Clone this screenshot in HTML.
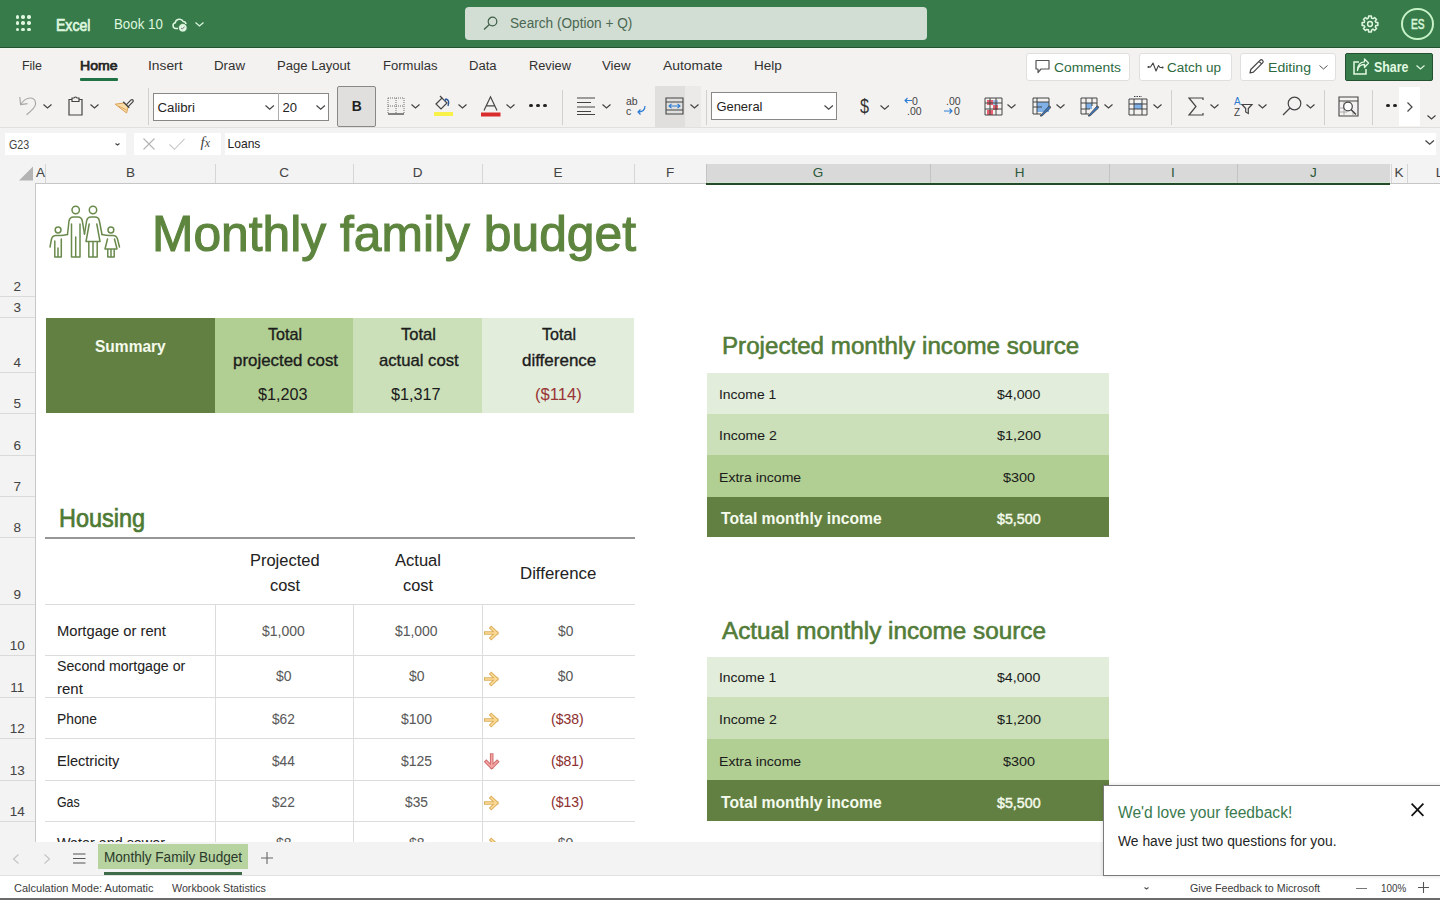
<!DOCTYPE html>
<html><head><meta charset="utf-8">
<style>
*{margin:0;padding:0;box-sizing:border-box}
html,body{width:1440px;height:900px;overflow:hidden;background:#fff;font-family:"Liberation Sans",sans-serif;position:relative}
.a{position:absolute}
.t{position:absolute;white-space:nowrap;line-height:1;}
.sh .t{-webkit-text-stroke:0.05px currentColor}
svg{position:absolute;overflow:visible}
</style></head><body>
<div class="a" style="left:0px;top:0px;width:1440px;height:47px;background:#377b4b;"></div>
<div class="a" style="left:0px;top:47px;width:1440px;height:1px;background:#24512f;"></div>
<div class="a" style="left:0px;top:48px;width:1440px;height:1px;background:#eef8ee;"></div>
<div class="a" style="left:0px;top:49px;width:1440px;height:78px;background:#f3f2f1;"></div>
<div class="a" style="left:0px;top:127px;width:1440px;height:1px;background:#e1e0df;"></div>
<div class="a" style="left:0px;top:128px;width:1440px;height:32px;background:#f3f3f3;"></div>
<div class="a" style="left:15.7px;top:15.3px;width:3.4px;height:3.4px;border-radius:50%;background:#dff7df"></div>
<div class="a" style="left:21.4px;top:15.3px;width:3.4px;height:3.4px;border-radius:50%;background:#dff7df"></div>
<div class="a" style="left:27.4px;top:15.3px;width:3.4px;height:3.4px;border-radius:50%;background:#dff7df"></div>
<div class="a" style="left:15.7px;top:21.3px;width:3.4px;height:3.4px;border-radius:50%;background:#dff7df"></div>
<div class="a" style="left:21.4px;top:21.3px;width:3.4px;height:3.4px;border-radius:50%;background:#dff7df"></div>
<div class="a" style="left:27.4px;top:21.3px;width:3.4px;height:3.4px;border-radius:50%;background:#dff7df"></div>
<div class="a" style="left:15.7px;top:27.5px;width:3.4px;height:3.4px;border-radius:50%;background:#dff7df"></div>
<div class="a" style="left:21.4px;top:27.5px;width:3.4px;height:3.4px;border-radius:50%;background:#dff7df"></div>
<div class="a" style="left:27.4px;top:27.5px;width:3.4px;height:3.4px;border-radius:50%;background:#dff7df"></div>
<div class="t" style="left:55.90px;top:17.09px;font-size:16.20px;color:#dff7df;font-weight:400;transform-origin:0 0;transform:scaleX(0.8683);-webkit-text-stroke:0.7px #dff7df;">Excel</div>
<div class="t" style="left:114.20px;top:17.27px;font-size:14.80px;color:#dff7df;font-weight:400;transform-origin:0 0;transform:scaleX(0.8984);">Book 10</div>
<svg style="left:172px;top:17px" width="16" height="15" viewBox="0 0 16 15">
<path d="M6 11.5 H3.8 A2.9 2.9 0 0 1 3.2 5.8 A4.3 4.3 0 0 1 11.3 4.6 A2.9 2.9 0 0 1 14 7.2" fill="none" stroke="#dff7df" stroke-width="1.5"/>
<circle cx="10.8" cy="10.8" r="4.3" fill="#dff7df" stroke="#377b4b" stroke-width="0.8"/>
<path d="M9 10.9 L10.3 12.1 L12.6 9.6" fill="none" stroke="#7a7a8a" stroke-width="1"/>
</svg>
<svg style="left:194.8px;top:21.9px" width="9" height="4.5" viewBox="0 0 9 4.5"><path d="M0.5 0.5 L4.5 4.0 L8.5 0.5" fill="none" stroke="#dff7df" stroke-width="1.2"/></svg>
<div class="a" style="left:465px;top:7px;width:462px;height:33px;background:#d2ddd3;border-radius:4px;"></div>
<svg style="left:483px;top:16px" width="15" height="14" viewBox="0 0 15 14">
<circle cx="9.5" cy="5.5" r="4.3" fill="none" stroke="#3f5f48" stroke-width="1.2"/>
<path d="M6.4 8.6 L1 13.6" stroke="#3f5f48" stroke-width="1.3"/></svg>
<div class="t" style="left:509.70px;top:17.48px;font-size:13.97px;color:#4a6852;font-weight:400;transform-origin:0 0;transform:scaleX(0.9756);">Search (Option + Q)</div>
<svg style="left:1362px;top:16px" width="16" height="16" viewBox="0 0 16 16">
<path d="M13.11 5.05 L14.11 6.48 L15.88 6.61 L15.88 9.39 L14.11 9.52 L13.70 9.53 L13.40 11.24 L14.55 12.59 L12.59 14.55 L11.24 13.40 L10.95 13.11 L9.52 14.11 L9.39 15.88 L6.61 15.88 L6.48 14.11 L6.47 13.70 L4.76 13.40 L3.41 14.55 L1.45 12.59 L2.60 11.24 L2.89 10.95 L1.89 9.52 L0.12 9.39 L0.12 6.61 L1.89 6.48 L2.30 6.47 L2.60 4.76 L1.45 3.41 L3.41 1.45 L4.76 2.60 L5.05 2.89 L6.48 1.89 L6.61 0.12 L9.39 0.12 L9.52 1.89 L9.53 2.30 L11.24 2.60 L12.59 1.45 L14.55 3.41 L13.40 4.76 Z" fill="none" stroke="#dff7df" stroke-width="1.5" stroke-linejoin="round"/>
<circle cx="8" cy="8" r="2.4" fill="none" stroke="#dff7df" stroke-width="1.5"/></svg>
<div class="a" style="left:1401px;top:7.5px;width:32.5px;height:32.5px;border-radius:50%;border:2.2px solid #c6f2c6"></div>
<div class="t" style="left:1410.50px;top:18.18px;font-size:13.97px;color:#d8f5d8;font-weight:400;transform-origin:0 0;transform:scaleX(0.7246);-webkit-text-stroke:0.6px #d8f5d8;">ES</div>
<div class="t" style="left:22.00px;top:59.01px;font-size:13.69px;color:#323130;font-weight:400;transform-origin:0 0;transform:scaleX(0.9069);">File</div>
<div class="t" style="left:80.00px;top:59.01px;font-size:13.69px;color:#252423;font-weight:400;transform-origin:0 0;transform:scaleX(1.0272);-webkit-text-stroke:0.75px #252423;">Home</div>
<div class="t" style="left:148.00px;top:59.01px;font-size:13.69px;color:#323130;font-weight:400;transform-origin:0 0;transform:scaleX(1.0079);">Insert</div>
<div class="t" style="left:214.00px;top:59.01px;font-size:13.69px;color:#323130;font-weight:400;transform-origin:0 0;transform:scaleX(0.9706);">Draw</div>
<div class="t" style="left:277.00px;top:59.01px;font-size:13.69px;color:#323130;font-weight:400;transform-origin:0 0;transform:scaleX(0.9563);">Page Layout</div>
<div class="t" style="left:383.00px;top:59.01px;font-size:13.69px;color:#323130;font-weight:400;transform-origin:0 0;transform:scaleX(0.9555);">Formulas</div>
<div class="t" style="left:469.40px;top:59.01px;font-size:13.69px;color:#323130;font-weight:400;transform-origin:0 0;transform:scaleX(0.9547);">Data</div>
<div class="t" style="left:528.60px;top:59.01px;font-size:13.69px;color:#323130;font-weight:400;transform-origin:0 0;transform:scaleX(0.9337);">Review</div>
<div class="t" style="left:602.00px;top:59.01px;font-size:13.69px;color:#323130;font-weight:400;transform-origin:0 0;transform:scaleX(0.9688);">View</div>
<div class="t" style="left:662.50px;top:59.01px;font-size:13.69px;color:#323130;font-weight:400;transform-origin:0 0;transform:scaleX(1.0157);">Automate</div>
<div class="t" style="left:753.60px;top:59.01px;font-size:13.69px;color:#323130;font-weight:400;transform-origin:0 0;transform:scaleX(0.9876);">Help</div>
<div class="a" style="left:80px;top:78px;width:38px;height:2.5px;background:#217346;border-radius:1px;"></div>
<div class="a" style="left:1025.5px;top:53px;width:104.0px;height:28px;background:#fff;border:1px solid #e1dfdd;border-radius:3px;"></div>
<div class="t" style="left:1054.00px;top:61.21px;font-size:13.69px;color:#2c6a40;font-weight:400;transform-origin:0 0;transform:scaleX(1.0126);">Comments</div>
<div class="a" style="left:1138.5px;top:53px;width:93.0px;height:28px;background:#fff;border:1px solid #e1dfdd;border-radius:3px;"></div>
<div class="t" style="left:1167.00px;top:61.21px;font-size:13.69px;color:#2c6a40;font-weight:400;transform-origin:0 0;transform:scaleX(0.9858);">Catch up</div>
<div class="a" style="left:1240px;top:53px;width:96px;height:28px;background:#fff;border:1px solid #e1dfdd;border-radius:3px;"></div>
<div class="t" style="left:1268.00px;top:61.21px;font-size:13.69px;color:#2c6a40;font-weight:400;transform-origin:0 0;transform:scaleX(1.0275);">Editing</div>
<svg style="left:1035px;top:59px" width="16" height="16" viewBox="0 0 16 16">
<path d="M1 1.5 H14 V10 H6 L3 13.5 V10 H1 Z" fill="none" stroke="#555" stroke-width="1.2" stroke-linejoin="round"/></svg>
<svg style="left:1147px;top:60px" width="18" height="14" viewBox="0 0 18 14">
<path d="M1.5 7 H3.5 L6 3 L9 11 L11.5 5.5 L13 7.5 H15.5" fill="none" stroke="#444" stroke-width="1.1" stroke-linejoin="round"/><circle cx="1.5" cy="7" r="1.1" fill="#444"/><circle cx="15.5" cy="7.5" r="1.1" fill="#444"/></svg>
<svg style="left:1248px;top:58px" width="17" height="17" viewBox="0 0 17 17">
<path d="M2 15 L2.8 11.5 L12 2.3 Q13.3 1 14.6 2.3 Q15.9 3.6 14.6 4.9 L5.4 14.1 Z M11 3.3 L13.6 5.9" fill="none" stroke="#444" stroke-width="1.2" stroke-linejoin="round"/></svg>
<svg style="left:1319.0px;top:65.2px" width="9" height="4.5" viewBox="0 0 9 4.5"><path d="M0.5 0.5 L4.5 4.0 L8.5 0.5" fill="none" stroke="#555" stroke-width="1.0"/></svg>
<div class="a" style="left:1345px;top:53px;width:88px;height:28px;background:#387b4b;border:1px solid #24512f;border-radius:2px;"></div>
<svg style="left:1352px;top:58px" width="18" height="18" viewBox="0 0 18 18">
<path d="M7 4 H2 V16 H14 V11" fill="none" stroke="#e2fae2" stroke-width="1.5"/>
<path d="M5.5 12.5 Q6.5 6.5 12.5 6.5 V9.5 L16.5 5 L12.5 1 V3.8 Q5.8 4 5.5 12.5 Z" fill="none" stroke="#e2fae2" stroke-width="1.3" stroke-linejoin="round"/></svg>
<div class="t" style="left:1374.00px;top:61.08px;font-size:13.97px;color:#e2fae2;font-weight:700;transform-origin:0 0;transform:scaleX(0.8888);">Share</div>
<svg style="left:1415.5px;top:65.2px" width="9" height="4.5" viewBox="0 0 9 4.5"><path d="M0.5 0.5 L4.5 4.0 L8.5 0.5" fill="none" stroke="#e2fae2" stroke-width="1.1"/></svg>
<svg style="left:18px;top:95px" width="19" height="21" viewBox="0 0 19 21">
<path d="M1.8 2 L2.6 9.6 L9.5 8.6" fill="none" stroke="#a8a8a8" stroke-width="1.2" stroke-linejoin="round"/>
<path d="M2.6 9.6 Q7 2.8 12.5 3 Q17.8 3.5 17.6 9 Q17.3 13 8.5 19.8" fill="none" stroke="#a8a8a8" stroke-width="1.2"/></svg>
<svg style="left:42.5px;top:104.2px" width="9" height="4.5" viewBox="0 0 9 4.5"><path d="M0.5 0.5 L4.5 4.0 L8.5 0.5" fill="none" stroke="#444" stroke-width="1.2"/></svg>
<svg style="left:68px;top:96px" width="15" height="20" viewBox="0 0 15 20">
<path d="M4 3.5 H1 V19 H14 V3.5 H11" fill="none" stroke="#444" stroke-width="1.2"/>
<path d="M4 2 H6 Q7.5 0 9 2 H11 V5.5 H4 Z" fill="none" stroke="#444" stroke-width="1.2"/></svg>
<svg style="left:90.0px;top:104.2px" width="9" height="4.5" viewBox="0 0 9 4.5"><path d="M0.5 0.5 L4.5 4.0 L8.5 0.5" fill="none" stroke="#444" stroke-width="1.2"/></svg>
<svg style="left:114px;top:97px" width="20" height="17" viewBox="0 0 20 17">
<path d="M1.2 7.2 L10 6 L14 10 L12.6 16 Z" fill="#f9dca6" stroke="#dba055" stroke-width="1" stroke-linejoin="round"/>
<path d="M4.5 9 L12.5 13" stroke="#dba055" stroke-width="0.9"/>
<path d="M9.2 4.8 L15.2 10.8" stroke="#444" stroke-width="1.3"/>
<path d="M12.2 7.8 L16.8 3.2 Q18 2 19 3 Q19.8 4 18.6 5.2 L14 9.8" fill="none" stroke="#444" stroke-width="1.2" stroke-linejoin="round"/></svg>
<div class="a" style="left:147.5px;top:88px;width:1px;height:37px;background:#d2d0ce;"></div>
<div class="a" style="left:152.5px;top:92.5px;width:176px;height:28px;background:#fff;border:1px solid #8a8886;"></div>
<div class="a" style="left:277.5px;top:93px;width:1px;height:27px;background:#b0aeac;"></div>
<div class="t" style="left:157.50px;top:100.80px;font-size:13.23px;color:#252423;font-weight:400;">Calibri</div>
<svg style="left:265.3px;top:104.7px" width="9.4" height="4.7" viewBox="0 0 9.4 4.7"><path d="M0.5 0.5 L4.7 4.2 L8.9 0.5" fill="none" stroke="#444" stroke-width="1.2"/></svg>
<div class="t" style="left:282.50px;top:100.96px;font-size:13.04px;color:#252423;font-weight:400;">20</div>
<svg style="left:315.8px;top:104.7px" width="9.4" height="4.7" viewBox="0 0 9.4 4.7"><path d="M0.5 0.5 L4.7 4.2 L8.9 0.5" fill="none" stroke="#444" stroke-width="1.2"/></svg>
<div class="a" style="left:337px;top:86.3px;width:39px;height:40.4px;background:#e1dfdd;border:1px solid #8a8886;border-radius:2px;"></div>
<div class="t" style="left:351.70px;top:99.58px;font-size:13.85px;color:#201f1e;font-weight:700;">B</div>
<svg style="left:387px;top:97px" width="18" height="18" viewBox="0 0 18 18">
<path d="M1 1 H17 M1 9 H17 M1 1 V17 M9 1 V17 M17 1 V17" fill="none" stroke="#707070" stroke-width="1" stroke-dasharray="1 1"/>
<path d="M1 17 H17" stroke="#444" stroke-width="1.3"/></svg>
<svg style="left:411.0px;top:104.2px" width="9" height="4.5" viewBox="0 0 9 4.5"><path d="M0.5 0.5 L4.5 4.0 L8.5 0.5" fill="none" stroke="#444" stroke-width="1.2"/></svg>
<svg style="left:434px;top:95px" width="20" height="22" viewBox="0 0 20 22">
<path d="M2 9 L8 3 L13 8 L7 14 Z" fill="none" stroke="#444" stroke-width="1.2"/>
<path d="M8 3 L6 1" stroke="#444" stroke-width="1.2"/>
<path d="M14 11 Q16 5 12 4 L10.5 6" fill="none" stroke="#2b5797" stroke-width="1.4"/>
<rect x="0" y="17" width="19" height="4" fill="#f7f14a"/></svg>
<svg style="left:458.0px;top:104.2px" width="9" height="4.5" viewBox="0 0 9 4.5"><path d="M0.5 0.5 L4.5 4.0 L8.5 0.5" fill="none" stroke="#444" stroke-width="1.2"/></svg>
<svg style="left:481px;top:96px" width="20" height="21" viewBox="0 0 20 21">
<path d="M3 14.5 L9.5 0.8 L16 14.5 M5.3 9.8 H13.7" fill="none" stroke="#444" stroke-width="1.2"/>
<rect x="0" y="16.5" width="19.5" height="4" fill="#d92c2c"/></svg>
<svg style="left:505.5px;top:104.2px" width="9" height="4.5" viewBox="0 0 9 4.5"><path d="M0.5 0.5 L4.5 4.0 L8.5 0.5" fill="none" stroke="#444" stroke-width="1.2"/></svg>
<div class="a" style="left:529.4px;top:104.2px;width:3.2px;height:3.2px;border-radius:50%;background:#252423"></div>
<div class="a" style="left:536.4px;top:104.2px;width:3.2px;height:3.2px;border-radius:50%;background:#252423"></div>
<div class="a" style="left:543.4px;top:104.2px;width:3.2px;height:3.2px;border-radius:50%;background:#252423"></div>
<div class="a" style="left:562px;top:90px;width:1px;height:35px;background:#d2d0ce;"></div>
<svg style="left:577px;top:97px" width="20" height="18" viewBox="0 0 20 18">
<path d="M0 1 H18 M0 5.5 H14 M0 10 H18 M0 14.5 H14 M0 17.5 H18" fill="none" stroke="#444" stroke-width="1.1"/></svg>
<svg style="left:601.5px;top:104.2px" width="9" height="4.5" viewBox="0 0 9 4.5"><path d="M0.5 0.5 L4.5 4.0 L8.5 0.5" fill="none" stroke="#444" stroke-width="1.2"/></svg>
<svg style="left:626px;top:96px" width="20" height="20" viewBox="0 0 20 20">
<text x="0" y="9" font-family="Liberation Sans" font-size="10.5" fill="#444">ab</text>
<text x="0" y="19" font-family="Liberation Sans" font-size="10.5" fill="#444">c</text>
<path d="M19 10 Q19 16 12 16 M14.5 13.5 L12 16 L14.5 18.5" fill="none" stroke="#2b7cd3" stroke-width="1.2"/></svg>
<div class="a" style="left:655px;top:86px;width:46px;height:41px;background:#ebeae9;"></div>
<div class="a" style="left:655px;top:86px;width:30px;height:41px;background:#e0dfde;"></div>
<svg style="left:665px;top:97px" width="19" height="18" viewBox="0 0 19 18">
<path d="M1 1 H18 V17 H1 Z M1 5 H18 M1 13 H18" fill="none" stroke="#444" stroke-width="1.1"/>
<path d="M4 9 H15 M6.5 6.8 L4 9 L6.5 11.2 M12.5 6.8 L15 9 L12.5 11.2" fill="none" stroke="#2b7cd3" stroke-width="1.1"/></svg>
<svg style="left:690.0px;top:104.2px" width="9" height="4.5" viewBox="0 0 9 4.5"><path d="M0.5 0.5 L4.5 4.0 L8.5 0.5" fill="none" stroke="#444" stroke-width="1.2"/></svg>
<div class="a" style="left:706px;top:90px;width:1px;height:35px;background:#d2d0ce;"></div>
<div class="a" style="left:711.4px;top:92.2px;width:126px;height:28.2px;background:#fff;border:1px solid #8a8886;"></div>
<div class="t" style="left:716.40px;top:100.73px;font-size:12.96px;color:#252423;font-weight:400;">General</div>
<svg style="left:824.3px;top:104.7px" width="9.4" height="4.7" viewBox="0 0 9.4 4.7"><path d="M0.5 0.5 L4.7 4.2 L8.9 0.5" fill="none" stroke="#444" stroke-width="1.2"/></svg>
<div class="t" style="left:860.00px;top:96.95px;font-size:19.55px;color:#333;font-weight:400;transform-origin:0 0;transform:scaleX(0.8277);">$</div>
<svg style="left:880.0px;top:104.7px" width="9.4" height="4.7" viewBox="0 0 9.4 4.7"><path d="M0.5 0.5 L4.7 4.2 L8.9 0.5" fill="none" stroke="#444" stroke-width="1.2"/></svg>
<svg style="left:903px;top:95px" width="22" height="22" viewBox="0 0 22 22">
<text x="9" y="9.5" font-family="Liberation Sans" font-size="10.5" fill="#444">0</text>
<text x="4" y="20" font-family="Liberation Sans" font-size="10.5" fill="#444">.00</text>
<path d="M9 5.5 H2 M4.5 3 L2 5.5 L4.5 8" fill="none" stroke="#2b7cd3" stroke-width="1.1"/></svg>
<svg style="left:942px;top:95px" width="22" height="22" viewBox="0 0 22 22">
<text x="4" y="9.5" font-family="Liberation Sans" font-size="10.5" fill="#444">.00</text>
<text x="12" y="20" font-family="Liberation Sans" font-size="10.5" fill="#444">0</text>
<path d="M2 16 H10 M7.5 13.5 L10 16 L7.5 18.5" fill="none" stroke="#2b7cd3" stroke-width="1.1"/></svg>
<svg style="left:984px;top:97px" width="19" height="19" viewBox="0 0 19 19">
<rect x="3" y="3" width="6" height="5" fill="#e9626f"/><rect x="9" y="8" width="5" height="5" fill="#e9626f"/><rect x="3" y="13" width="6" height="5" fill="#e9626f"/>
<rect x="9" y="3" width="5" height="5" fill="#a7c0e8"/>
<path d="M1 1 H18 V18 H1 Z M1 6 H18 M1 12 H18 M6 1 V18 M12 1 V18" fill="none" stroke="#444" stroke-width="1"/></svg>
<svg style="left:1007.0px;top:104.2px" width="9" height="4.5" viewBox="0 0 9 4.5"><path d="M0.5 0.5 L4.5 4.0 L8.5 0.5" fill="none" stroke="#444" stroke-width="1.2"/></svg>
<svg style="left:1032px;top:97px" width="20" height="20" viewBox="0 0 20 20">
<rect x="5" y="5" width="12" height="10" fill="#7fb0e8"/>
<path d="M1 1 H17 V12 M1 1 V17 H9 M1 5 H17 M1 10 H10 M5 1 V17" fill="none" stroke="#444" stroke-width="1"/>
<path d="M8 19 L17 9 Q19 9 18.5 11 L10 19 Z" fill="#3a78c2" stroke="#444" stroke-width="0.8"/></svg>
<svg style="left:1056.0px;top:104.2px" width="9" height="4.5" viewBox="0 0 9 4.5"><path d="M0.5 0.5 L4.5 4.0 L8.5 0.5" fill="none" stroke="#444" stroke-width="1.2"/></svg>
<svg style="left:1080px;top:97px" width="20" height="20" viewBox="0 0 20 20">
<rect x="6" y="6" width="6" height="6" fill="#7fb0e8"/>
<path d="M1 1 H17 V12 M1 1 V17 H9 M1 6 H17 M1 12 H10 M6 1 V17 M12 1 V9" fill="none" stroke="#444" stroke-width="1"/>
<path d="M8 19 L17 9 Q19 9 18.5 11 L10 19 Z" fill="#3a78c2" stroke="#444" stroke-width="0.8"/></svg>
<svg style="left:1104.0px;top:104.2px" width="9" height="4.5" viewBox="0 0 9 4.5"><path d="M0.5 0.5 L4.5 4.0 L8.5 0.5" fill="none" stroke="#444" stroke-width="1.2"/></svg>
<svg style="left:1128px;top:96px" width="20" height="20" viewBox="0 0 20 20">
<rect x="6" y="7" width="8" height="6" fill="#7fb0e8"/>
<path d="M1 3 H19 V19 H1 Z M1 8 H19 M1 13 H19 M6 3 V19 M14 3 V19" fill="none" stroke="#444" stroke-width="1"/>
<path d="M6 0.5 H14" stroke="#444" stroke-width="1" stroke-dasharray="1.5 1"/></svg>
<svg style="left:1152.5px;top:104.2px" width="9" height="4.5" viewBox="0 0 9 4.5"><path d="M0.5 0.5 L4.5 4.0 L8.5 0.5" fill="none" stroke="#444" stroke-width="1.2"/></svg>
<div class="a" style="left:1171px;top:90px;width:1px;height:35px;background:#d2d0ce;"></div>
<svg style="left:1188px;top:97px" width="16" height="19" viewBox="0 0 16 19">
<path d="M15 3 V1 H1 L8 9.5 L1 18 H15 V16" fill="none" stroke="#444" stroke-width="1.2"/></svg>
<svg style="left:1210.0px;top:104.2px" width="9" height="4.5" viewBox="0 0 9 4.5"><path d="M0.5 0.5 L4.5 4.0 L8.5 0.5" fill="none" stroke="#444" stroke-width="1.2"/></svg>
<svg style="left:1234px;top:96px" width="20" height="21" viewBox="0 0 20 21">
<text x="0" y="9" font-family="Liberation Sans" font-size="10" fill="#2b7cd3">A</text>
<text x="0" y="20" font-family="Liberation Sans" font-size="10" fill="#444">Z</text>
<path d="M8 8.5 H18 L14.3 12.5 V17.5 L11.7 16 V12.5 Z" fill="none" stroke="#444" stroke-width="1.2"/></svg>
<svg style="left:1258.0px;top:104.2px" width="9" height="4.5" viewBox="0 0 9 4.5"><path d="M0.5 0.5 L4.5 4.0 L8.5 0.5" fill="none" stroke="#444" stroke-width="1.2"/></svg>
<svg style="left:1282px;top:96px" width="20" height="20" viewBox="0 0 20 20">
<circle cx="12.5" cy="7.5" r="6.3" fill="none" stroke="#444" stroke-width="1.2"/>
<path d="M8 12 L1 19" stroke="#444" stroke-width="1.3"/></svg>
<svg style="left:1305.5px;top:104.2px" width="9" height="4.5" viewBox="0 0 9 4.5"><path d="M0.5 0.5 L4.5 4.0 L8.5 0.5" fill="none" stroke="#444" stroke-width="1.2"/></svg>
<div class="a" style="left:1324px;top:90px;width:1px;height:35px;background:#d2d0ce;"></div>
<svg style="left:1338px;top:96px" width="21" height="21" viewBox="0 0 21 21">
<path d="M1 1 H20 V20 H1 Z M1 5 H20" fill="none" stroke="#444" stroke-width="1.1"/>
<path d="M1 12 H7 M1 16 H9 M6 5 V20 M15 16 V20" fill="none" stroke="#999" stroke-width="0.8"/>
<circle cx="10" cy="10.5" r="4.3" fill="#fff" stroke="#444" stroke-width="1.2"/>
<path d="M13 13.5 L18 18.5" stroke="#444" stroke-width="1.5"/></svg>
<div class="a" style="left:1372px;top:90px;width:1px;height:35px;background:#d2d0ce;"></div>
<div class="a" style="left:1386.4px;top:104.2px;width:3.2px;height:3.2px;border-radius:50%;background:#252423"></div>
<div class="a" style="left:1393.4px;top:104.2px;width:3.2px;height:3.2px;border-radius:50%;background:#252423"></div>
<div class="a" style="left:1399px;top:87px;width:21px;height:39px;background:#fff;"></div>
<svg style="left:1406.5px;top:101.5px" width="6" height="10" viewBox="0 0 6 10">
<path d="M0.5 0.5 L5 5 L0.5 9.5" fill="none" stroke="#444" stroke-width="1.2"/></svg>
<svg style="left:1426.5px;top:114.8px" width="9" height="4.5" viewBox="0 0 9 4.5"><path d="M0.5 0.5 L4.5 4.0 L8.5 0.5" fill="none" stroke="#444" stroke-width="1.2"/></svg>
<div class="a" style="left:5px;top:132.5px;width:120.5px;height:22.5px;background:#fff;"></div>
<div class="t" style="left:8.75px;top:139.36px;font-size:12.57px;color:#444;font-weight:400;transform-origin:0 0;transform:scaleX(0.8524);">G23</div>
<svg style="left:115.0px;top:142.8px" width="5" height="2.5" viewBox="0 0 5 2.5"><path d="M0.5 0.5 L2.5 2.0 L4.5 0.5" fill="none" stroke="#444" stroke-width="1.1"/></svg>
<div class="a" style="left:134px;top:132.5px;width:86.5px;height:22.5px;background:#fff;"></div>
<svg style="left:142.5px;top:138px" width="12" height="12" viewBox="0 0 12 12">
<path d="M0.5 0.5 L11.5 11.5 M11.5 0.5 L0.5 11.5" stroke="#b3b3b3" stroke-width="1.1"/></svg>
<svg style="left:169px;top:138px" width="16" height="12" viewBox="0 0 16 12">
<path d="M0.5 6.5 L5.5 11.3 L15.5 0.8" fill="none" stroke="#c6c6c6" stroke-width="1.1"/></svg>
<div class="t" style="left:200.5px;top:135px;font-family:'Liberation Serif';font-style:italic;font-size:15px;color:#444">f<span style="font-size:12px">x</span></div>
<div class="a" style="left:224.5px;top:132.5px;width:1211px;height:22.5px;background:#fff;"></div>
<div class="t" style="left:227.50px;top:138.28px;font-size:12.08px;color:#252423;font-weight:400;">Loans</div>
<svg style="left:1424.8px;top:140.2px" width="9.4" height="4.7" viewBox="0 0 9.4 4.7"><path d="M0.5 0.5 L4.7 4.2 L8.9 0.5" fill="none" stroke="#444" stroke-width="1.3"/></svg>
<div class="sh"><div class="a" style="left:0px;top:160px;width:1440px;height:24px;background:#f3f3f3;"></div>
<div class="a" style="left:706px;top:164px;width:684px;height:19px;background:#d9d9d9;"></div>
<div class="a" style="left:706px;top:182px;width:684px;height:1px;background:#d5e5d5;"></div>
<div class="a" style="left:706px;top:183px;width:684px;height:1.5px;background:#244a2a;"></div>
<div class="a" style="left:35px;top:183px;width:671px;height:1px;background:#c6c6c6;"></div>
<div class="a" style="left:1390px;top:183px;width:50px;height:1px;background:#c6c6c6;"></div>
<div class="a" style="left:45px;top:164px;width:1px;height:19px;background:#d6d6d6;"></div>
<div class="a" style="left:215px;top:164px;width:1px;height:19px;background:#d6d6d6;"></div>
<div class="a" style="left:353px;top:164px;width:1px;height:19px;background:#d6d6d6;"></div>
<div class="a" style="left:482px;top:164px;width:1px;height:19px;background:#d6d6d6;"></div>
<div class="a" style="left:634px;top:164px;width:1px;height:19px;background:#d6d6d6;"></div>
<div class="a" style="left:930px;top:164px;width:1px;height:19px;background:#c4c4c4;"></div>
<div class="a" style="left:1109px;top:164px;width:1px;height:19px;background:#c4c4c4;"></div>
<div class="a" style="left:1237px;top:164px;width:1px;height:19px;background:#c4c4c4;"></div>
<div class="a" style="left:1391px;top:164px;width:1px;height:19px;background:#d6d6d6;"></div>
<div class="a" style="left:1407px;top:164px;width:1px;height:19px;background:#d6d6d6;"></div>
<div class="a" style="left:706px;top:164px;width:1px;height:19px;background:#c4c4c4;"></div>
<svg style="left:19px;top:166px" width="15" height="15" viewBox="0 0 15 15"><path d="M14 0.5 V14.5 H0 Z" fill="#b4b4b4"/></svg>
<div class="t" style="left:36.00px;top:165.87px;font-size:13.50px;color:#444;font-weight:400;">A</div>
<div class="t" style="left:126.00px;top:165.87px;font-size:13.50px;color:#444;font-weight:400;">B</div>
<div class="t" style="left:279.13px;top:165.87px;font-size:13.50px;color:#444;font-weight:400;">C</div>
<div class="t" style="left:412.63px;top:165.87px;font-size:13.50px;color:#444;font-weight:400;">D</div>
<div class="t" style="left:553.50px;top:165.87px;font-size:13.50px;color:#444;font-weight:400;">E</div>
<div class="t" style="left:665.88px;top:165.87px;font-size:13.50px;color:#444;font-weight:400;">F</div>
<div class="t" style="left:812.75px;top:165.87px;font-size:13.50px;color:#2d5a3a;font-weight:400;">G</div>
<div class="t" style="left:1014.63px;top:165.87px;font-size:13.50px;color:#2d5a3a;font-weight:400;">H</div>
<div class="t" style="left:1171.12px;top:165.87px;font-size:13.50px;color:#2d5a3a;font-weight:400;">I</div>
<div class="t" style="left:1310.12px;top:165.87px;font-size:13.50px;color:#2d5a3a;font-weight:400;">J</div>
<div class="t" style="left:1394.50px;top:165.87px;font-size:13.50px;color:#444;font-weight:400;">K</div>
<div class="t" style="left:1435.75px;top:165.87px;font-size:13.50px;color:#444;font-weight:400;">L</div>
<div class="a" style="left:0px;top:184px;width:35px;height:658px;background:#f3f3f3;"></div>
<div class="a" style="left:35px;top:184px;width:1px;height:658px;background:#c8c8c8;"></div>
<div class="a" style="left:0px;top:296px;width:35px;height:1px;background:#dadada;"></div>
<div class="t" style="left:13.45px;top:280.37px;font-size:13.50px;color:#444;font-weight:400;">2</div>
<div class="a" style="left:0px;top:317px;width:35px;height:1px;background:#dadada;"></div>
<div class="t" style="left:13.45px;top:301.37px;font-size:13.50px;color:#444;font-weight:400;">3</div>
<div class="a" style="left:0px;top:372px;width:35px;height:1px;background:#dadada;"></div>
<div class="t" style="left:13.45px;top:356.37px;font-size:13.50px;color:#444;font-weight:400;">4</div>
<div class="a" style="left:0px;top:413px;width:35px;height:1px;background:#dadada;"></div>
<div class="t" style="left:13.45px;top:397.37px;font-size:13.50px;color:#444;font-weight:400;">5</div>
<div class="a" style="left:0px;top:455px;width:35px;height:1px;background:#dadada;"></div>
<div class="t" style="left:13.45px;top:439.37px;font-size:13.50px;color:#444;font-weight:400;">6</div>
<div class="a" style="left:0px;top:496px;width:35px;height:1px;background:#dadada;"></div>
<div class="t" style="left:13.45px;top:480.37px;font-size:13.50px;color:#444;font-weight:400;">7</div>
<div class="a" style="left:0px;top:537px;width:35px;height:1px;background:#dadada;"></div>
<div class="t" style="left:13.45px;top:521.37px;font-size:13.50px;color:#444;font-weight:400;">8</div>
<div class="a" style="left:0px;top:604px;width:35px;height:1px;background:#dadada;"></div>
<div class="t" style="left:13.45px;top:588.37px;font-size:13.50px;color:#444;font-weight:400;">9</div>
<div class="a" style="left:0px;top:655px;width:35px;height:1px;background:#dadada;"></div>
<div class="t" style="left:9.69px;top:639.37px;font-size:13.50px;color:#444;font-weight:400;">10</div>
<div class="a" style="left:0px;top:697px;width:35px;height:1px;background:#dadada;"></div>
<div class="t" style="left:10.19px;top:681.37px;font-size:13.50px;color:#444;font-weight:400;">11</div>
<div class="a" style="left:0px;top:738px;width:35px;height:1px;background:#dadada;"></div>
<div class="t" style="left:9.69px;top:722.37px;font-size:13.50px;color:#444;font-weight:400;">12</div>
<div class="a" style="left:0px;top:780px;width:35px;height:1px;background:#dadada;"></div>
<div class="t" style="left:9.69px;top:764.37px;font-size:13.50px;color:#444;font-weight:400;">13</div>
<div class="a" style="left:0px;top:821px;width:35px;height:1px;background:#dadada;"></div>
<div class="t" style="left:9.69px;top:805.37px;font-size:13.50px;color:#444;font-weight:400;">14</div>
<svg style="left:45px;top:200px" width="80" height="62" viewBox="0 0 80 62">
<g fill="none" stroke="#6a8a4c" stroke-width="1.5" stroke-linejoin="round" stroke-linecap="round">
<circle cx="30.7" cy="10" r="3.7"/><circle cx="48" cy="10" r="3.7"/>
<circle cx="13.1" cy="30" r="2.9"/><circle cx="65.9" cy="30" r="2.9"/>
<path d="M22.5 34.5 L24 21 Q24.8 17 28.5 17 H33 Q36.6 17 37.3 21 L39.5 34"/>
<path d="M26.5 24 V57 H35 V24 M30.7 37 V57"/>
<path d="M39.5 34 L41.6 21 Q42.3 17 46 17 H50 Q53.7 17 54.4 21 L57 34.5"/>
<path d="M44.2 24 L41 41.5 H55 L51.8 24 M43.8 41.5 V57 H52.2 V41.5 M48 41.5 V57"/>
<path d="M5 47 L6.5 39 Q7.5 35.5 11 35.5 H15.5 Q18 35.5 22.5 34.5"/>
<path d="M9.8 41 V57 H16.3 V39 M13 48 V57"/>
<path d="M57 34.5 Q61.5 35.5 64 35.5 H68 Q71.5 35.5 72.5 39 L74.5 47"/>
<path d="M62.5 39 L60 49 H72 L69.5 39 M62.8 49 V57 H69.2 V49 M66 49 V57"/>
</g></svg>
<div class="t" style="left:152.00px;top:210.33px;font-size:49.58px;color:#5d853e;font-weight:400;transform-origin:0 0;transform:scaleX(1.0036);-webkit-text-stroke:1.1px #5d853e;">Monthly family budget</div>
<div class="a" style="left:46px;top:318px;width:169px;height:95px;background:#628041;"></div>
<div class="a" style="left:215px;top:318px;width:138px;height:95px;background:#b2cf93;"></div>
<div class="a" style="left:353px;top:318px;width:129px;height:95px;background:#cbe0b9;"></div>
<div class="a" style="left:482px;top:318px;width:152px;height:95px;background:#e2eddc;"></div>
<div class="t" style="left:95.20px;top:338.27px;font-size:16.34px;color:#f4faec;font-weight:700;transform-origin:0 0;transform:scaleX(0.9506);">Summary</div>
<div class="t" style="left:267.70px;top:325.67px;font-size:16.34px;color:#1c1c1c;font-weight:400;transform-origin:0 0;transform:scaleX(0.9880);-webkit-text-stroke:0.35px #1c1c1c;">Total</div>
<div class="t" style="left:232.70px;top:351.87px;font-size:16.34px;color:#1c1c1c;font-weight:400;transform-origin:0 0;transform:scaleX(1.0332);-webkit-text-stroke:0.35px #1c1c1c;">projected cost</div>
<div class="t" style="left:258.00px;top:385.97px;font-size:16.34px;color:#1c1c1c;font-weight:400;transform-origin:0 0;transform:scaleX(0.9925);">$1,203</div>
<div class="t" style="left:400.90px;top:325.67px;font-size:16.34px;color:#1c1c1c;font-weight:400;transform-origin:0 0;transform:scaleX(1.0141);-webkit-text-stroke:0.35px #1c1c1c;">Total</div>
<div class="t" style="left:378.50px;top:351.87px;font-size:16.34px;color:#1c1c1c;font-weight:400;transform-origin:0 0;transform:scaleX(1.0204);-webkit-text-stroke:0.35px #1c1c1c;">actual cost</div>
<div class="t" style="left:391.10px;top:385.97px;font-size:16.34px;color:#1c1c1c;font-weight:400;transform-origin:0 0;transform:scaleX(0.9925);">$1,317</div>
<div class="t" style="left:541.90px;top:325.67px;font-size:16.34px;color:#1c1c1c;font-weight:400;transform-origin:0 0;transform:scaleX(0.9880);-webkit-text-stroke:0.35px #1c1c1c;">Total</div>
<div class="t" style="left:521.50px;top:351.87px;font-size:16.34px;color:#1c1c1c;font-weight:400;transform-origin:0 0;transform:scaleX(1.0397);-webkit-text-stroke:0.35px #1c1c1c;">difference</div>
<div class="t" style="left:535.10px;top:385.97px;font-size:16.34px;color:#9a3636;font-weight:400;transform-origin:0 0;transform:scaleX(1.0148);">($114)</div>
<div class="t" style="left:59.20px;top:506.13px;font-size:25.84px;color:#4e7a34;font-weight:400;transform-origin:0 0;transform:scaleX(0.9083);-webkit-text-stroke:0.7px #4e7a34;">Housing</div>
<div class="a" style="left:45px;top:537px;width:590px;height:2px;background:#969696;"></div>
<div class="t" style="left:250.00px;top:552.00px;font-size:16.06px;color:#222;font-weight:400;transform-origin:0 0;transform:scaleX(1.0258);">Projected</div>
<div class="t" style="left:270.00px;top:577.10px;font-size:16.06px;color:#222;font-weight:400;transform-origin:0 0;transform:scaleX(1.0185);">cost</div>
<div class="t" style="left:395.00px;top:552.00px;font-size:16.06px;color:#222;font-weight:400;transform-origin:0 0;transform:scaleX(1.0305);">Actual</div>
<div class="t" style="left:403.00px;top:577.10px;font-size:16.06px;color:#222;font-weight:400;transform-origin:0 0;transform:scaleX(1.0185);">cost</div>
<div class="t" style="left:520.40px;top:564.60px;font-size:16.06px;color:#222;font-weight:400;transform-origin:0 0;transform:scaleX(1.0465);">Difference</div>
<div class="a" style="left:45px;top:604px;width:590px;height:1px;background:#dcdcdc;"></div>
<div class="a" style="left:45px;top:655px;width:590px;height:1px;background:#dcdcdc;"></div>
<div class="a" style="left:45px;top:697px;width:590px;height:1px;background:#dcdcdc;"></div>
<div class="a" style="left:45px;top:738px;width:590px;height:1px;background:#dcdcdc;"></div>
<div class="a" style="left:45px;top:780px;width:590px;height:1px;background:#dcdcdc;"></div>
<div class="a" style="left:45px;top:821px;width:590px;height:1px;background:#dcdcdc;"></div>
<div class="a" style="left:215px;top:604px;width:1px;height:238px;background:#dcdcdc;"></div>
<div class="a" style="left:353px;top:604px;width:1px;height:238px;background:#dcdcdc;"></div>
<div class="a" style="left:482px;top:604px;width:1px;height:238px;background:#dcdcdc;"></div>
<div class="t" style="left:57.30px;top:624.29px;font-size:14.66px;color:#222;font-weight:400;transform-origin:0 0;transform:scaleX(1.0046);">Mortgage or rent</div>
<div class="t" style="left:261.90px;top:623.64px;font-size:14.25px;color:#595959;font-weight:400;transform-origin:0 0;transform:scaleX(0.9801);">$1,000</div>
<div class="t" style="left:395.30px;top:623.64px;font-size:14.25px;color:#595959;font-weight:400;transform-origin:0 0;transform:scaleX(0.9778);">$1,000</div>
<svg style="left:484px;top:625.5px" width="16" height="14" viewBox="0 0 16 14">
<path d="M1.8 7 H12.5 M7.3 2 L12.6 7 L7.3 12" fill="none" stroke="#dcae5c" stroke-width="3.6" stroke-linejoin="miter" stroke-linecap="square"/>
<path d="M1.8 7 H12.5 M7.3 2 L12.6 7 L7.3 12" fill="none" stroke="#fcdc98" stroke-width="1.6" stroke-linejoin="miter" stroke-linecap="square"/></svg>
<div class="t" style="left:558.00px;top:623.64px;font-size:14.25px;color:#595959;font-weight:400;transform-origin:0 0;transform:scaleX(0.9657);">$0</div>
<div class="t" style="left:56.90px;top:659.04px;font-size:14.25px;color:#222;font-weight:400;transform-origin:0 0;transform:scaleX(0.9932);">Second mortgage or</div>
<div class="t" style="left:57.00px;top:681.69px;font-size:14.25px;color:#222;font-weight:400;transform-origin:0 0;transform:scaleX(1.0511);">rent</div>
<div class="t" style="left:276.03px;top:670.38px;font-size:13.97px;color:#595959;font-weight:400;transform-origin:0 0;transform:scaleX(1.0000);">$0</div>
<div class="t" style="left:409.03px;top:670.38px;font-size:13.97px;color:#595959;font-weight:400;transform-origin:0 0;transform:scaleX(1.0000);">$0</div>
<svg style="left:484px;top:671.5px" width="16" height="14" viewBox="0 0 16 14">
<path d="M1.8 7 H12.5 M7.3 2 L12.6 7 L7.3 12" fill="none" stroke="#dcae5c" stroke-width="3.6" stroke-linejoin="miter" stroke-linecap="square"/>
<path d="M1.8 7 H12.5 M7.3 2 L12.6 7 L7.3 12" fill="none" stroke="#fcdc98" stroke-width="1.6" stroke-linejoin="miter" stroke-linecap="square"/></svg>
<div class="t" style="left:557.83px;top:670.38px;font-size:13.97px;color:#595959;font-weight:400;transform-origin:0 0;transform:scaleX(1.0000);">$0</div>
<div class="t" style="left:57.30px;top:711.99px;font-size:14.66px;color:#222;font-weight:400;transform-origin:0 0;transform:scaleX(0.9434);">Phone</div>
<div class="t" style="left:271.60px;top:712.34px;font-size:14.25px;color:#595959;font-weight:400;transform-origin:0 0;transform:scaleX(0.9594);">$62</div>
<div class="t" style="left:401.10px;top:712.34px;font-size:14.25px;color:#595959;font-weight:400;transform-origin:0 0;transform:scaleX(0.9814);">$100</div>
<svg style="left:484px;top:713.0px" width="16" height="14" viewBox="0 0 16 14">
<path d="M1.8 7 H12.5 M7.3 2 L12.6 7 L7.3 12" fill="none" stroke="#dcae5c" stroke-width="3.6" stroke-linejoin="miter" stroke-linecap="square"/>
<path d="M1.8 7 H12.5 M7.3 2 L12.6 7 L7.3 12" fill="none" stroke="#fcdc98" stroke-width="1.6" stroke-linejoin="miter" stroke-linecap="square"/></svg>
<div class="t" style="left:551.10px;top:712.34px;font-size:14.25px;color:#8e2f2f;font-weight:400;transform-origin:0 0;transform:scaleX(0.9834);">($38)</div>
<div class="t" style="left:57.30px;top:753.59px;font-size:14.66px;color:#222;font-weight:400;transform-origin:0 0;transform:scaleX(0.9930);">Electricity</div>
<div class="t" style="left:271.60px;top:753.94px;font-size:14.25px;color:#595959;font-weight:400;transform-origin:0 0;transform:scaleX(0.9594);">$44</div>
<div class="t" style="left:401.10px;top:753.94px;font-size:14.25px;color:#595959;font-weight:400;transform-origin:0 0;transform:scaleX(0.9814);">$125</div>
<svg style="left:484px;top:753.0px" width="16" height="17" viewBox="0 0 16 17">
<path d="M7.7 2 V14 M2.3 8.8 L7.7 14.2 L13.1 8.8" fill="none" stroke="#cf6f6f" stroke-width="3.6" stroke-linejoin="miter" stroke-linecap="square"/>
<path d="M7.7 2 V14 M2.3 8.8 L7.7 14.2 L13.1 8.8" fill="none" stroke="#f6a5a5" stroke-width="1.6" stroke-linejoin="miter" stroke-linecap="square"/></svg>
<div class="t" style="left:551.10px;top:753.94px;font-size:14.25px;color:#8e2f2f;font-weight:400;transform-origin:0 0;transform:scaleX(0.9834);">($81)</div>
<div class="t" style="left:57.30px;top:794.69px;font-size:14.66px;color:#222;font-weight:400;transform-origin:0 0;transform:scaleX(0.8441);">Gas</div>
<div class="t" style="left:271.60px;top:795.04px;font-size:14.25px;color:#595959;font-weight:400;transform-origin:0 0;transform:scaleX(0.9594);">$22</div>
<div class="t" style="left:404.90px;top:795.04px;font-size:14.25px;color:#595959;font-weight:400;transform-origin:0 0;transform:scaleX(0.9636);">$35</div>
<svg style="left:484px;top:796.0px" width="16" height="14" viewBox="0 0 16 14">
<path d="M1.8 7 H12.5 M7.3 2 L12.6 7 L7.3 12" fill="none" stroke="#dcae5c" stroke-width="3.6" stroke-linejoin="miter" stroke-linecap="square"/>
<path d="M1.8 7 H12.5 M7.3 2 L12.6 7 L7.3 12" fill="none" stroke="#fcdc98" stroke-width="1.6" stroke-linejoin="miter" stroke-linecap="square"/></svg>
<div class="t" style="left:551.10px;top:795.04px;font-size:14.25px;color:#8e2f2f;font-weight:400;transform-origin:0 0;transform:scaleX(0.9834);">($13)</div>
<div class="t" style="left:57.30px;top:836.09px;font-size:14.66px;color:#222;font-weight:400;transform-origin:0 0;transform:scaleX(0.9792);">Water and sewer</div>
<div class="t" style="left:276.03px;top:836.68px;font-size:13.97px;color:#595959;font-weight:400;transform-origin:0 0;transform:scaleX(1.0000);">$8</div>
<div class="t" style="left:409.03px;top:836.68px;font-size:13.97px;color:#595959;font-weight:400;transform-origin:0 0;transform:scaleX(1.0000);">$8</div>
<svg style="left:484px;top:837.5px" width="16" height="14" viewBox="0 0 16 14">
<path d="M1.8 7 H12.5 M7.3 2 L12.6 7 L7.3 12" fill="none" stroke="#dcae5c" stroke-width="3.6" stroke-linejoin="miter" stroke-linecap="square"/>
<path d="M1.8 7 H12.5 M7.3 2 L12.6 7 L7.3 12" fill="none" stroke="#fcdc98" stroke-width="1.6" stroke-linejoin="miter" stroke-linecap="square"/></svg>
<div class="t" style="left:557.83px;top:836.68px;font-size:13.97px;color:#595959;font-weight:400;transform-origin:0 0;transform:scaleX(1.0000);">$0</div>
<div class="t" style="left:721.70px;top:334.39px;font-size:24.58px;color:#527c38;font-weight:400;transform-origin:0 0;transform:scaleX(0.9829);-webkit-text-stroke:0.6px #527c38;">Projected monthly income source</div>
<div class="a" style="left:707px;top:373px;width:402px;height:40.5px;background:#e2eddc;"></div>
<div class="a" style="left:707px;top:413.5px;width:402px;height:41.5px;background:#cbe0b9;"></div>
<div class="a" style="left:707px;top:455px;width:402px;height:41.5px;background:#b2cf93;"></div>
<div class="a" style="left:707px;top:496.5px;width:402px;height:40.5px;background:#628041;"></div>
<div class="t" style="left:719.40px;top:387.65px;font-size:13.41px;color:#1c1c1c;font-weight:400;transform-origin:0 0;transform:scaleX(1.0391);">Income 1</div>
<div class="t" style="left:996.70px;top:387.65px;font-size:13.41px;color:#1c1c1c;font-weight:400;transform-origin:0 0;transform:scaleX(1.0560);">$4,000</div>
<div class="t" style="left:719.40px;top:429.35px;font-size:13.41px;color:#1c1c1c;font-weight:400;transform-origin:0 0;transform:scaleX(1.0481);">Income 2</div>
<div class="t" style="left:996.70px;top:429.35px;font-size:13.41px;color:#1c1c1c;font-weight:400;transform-origin:0 0;transform:scaleX(1.0755);">$1,200</div>
<div class="t" style="left:719.40px;top:471.15px;font-size:13.41px;color:#1c1c1c;font-weight:400;transform-origin:0 0;transform:scaleX(1.0507);">Extra income</div>
<div class="t" style="left:1002.50px;top:471.15px;font-size:13.41px;color:#1c1c1c;font-weight:400;transform-origin:0 0;transform:scaleX(1.0763);">$300</div>
<div class="t" style="left:720.50px;top:510.16px;font-size:17.18px;color:#f4faec;font-weight:700;transform-origin:0 0;transform:scaleX(0.9118);">Total monthly income</div>
<div class="t" style="left:996.70px;top:511.20px;font-size:15.36px;color:#f4faec;font-weight:400;transform-origin:0 0;transform:scaleX(0.9280);-webkit-text-stroke:0.45px #f4faec;">$5,500</div>
<div class="t" style="left:721.70px;top:619.39px;font-size:24.58px;color:#527c38;font-weight:400;transform-origin:0 0;transform:scaleX(0.9882);-webkit-text-stroke:0.6px #527c38;">Actual monthly income source</div>
<div class="a" style="left:707px;top:656.5px;width:402px;height:40.5px;background:#e2eddc;"></div>
<div class="a" style="left:707px;top:697.0px;width:402px;height:41.5px;background:#cbe0b9;"></div>
<div class="a" style="left:707px;top:738.5px;width:402px;height:41.5px;background:#b2cf93;"></div>
<div class="a" style="left:707px;top:780.0px;width:402px;height:40.5px;background:#628041;"></div>
<div class="t" style="left:719.40px;top:671.15px;font-size:13.41px;color:#1c1c1c;font-weight:400;transform-origin:0 0;transform:scaleX(1.0391);">Income 1</div>
<div class="t" style="left:996.70px;top:671.15px;font-size:13.41px;color:#1c1c1c;font-weight:400;transform-origin:0 0;transform:scaleX(1.0560);">$4,000</div>
<div class="t" style="left:719.40px;top:712.85px;font-size:13.41px;color:#1c1c1c;font-weight:400;transform-origin:0 0;transform:scaleX(1.0481);">Income 2</div>
<div class="t" style="left:996.70px;top:712.85px;font-size:13.41px;color:#1c1c1c;font-weight:400;transform-origin:0 0;transform:scaleX(1.0755);">$1,200</div>
<div class="t" style="left:719.40px;top:754.65px;font-size:13.41px;color:#1c1c1c;font-weight:400;transform-origin:0 0;transform:scaleX(1.0507);">Extra income</div>
<div class="t" style="left:1002.50px;top:754.65px;font-size:13.41px;color:#1c1c1c;font-weight:400;transform-origin:0 0;transform:scaleX(1.0763);">$300</div>
<div class="t" style="left:720.50px;top:793.66px;font-size:17.18px;color:#f4faec;font-weight:700;transform-origin:0 0;transform:scaleX(0.9118);">Total monthly income</div>
<div class="t" style="left:996.70px;top:794.70px;font-size:15.36px;color:#f4faec;font-weight:400;transform-origin:0 0;transform:scaleX(0.9280);-webkit-text-stroke:0.45px #f4faec;">$5,500</div>
</div><div class="a" style="left:0px;top:842px;width:1440px;height:33px;background:#f3f3f3;"></div>
<svg style="left:12px;top:854px" width="8" height="10" viewBox="0 0 8 10"><path d="M6.5 0.5 L1.5 5 L6.5 9.5" fill="none" stroke="#c2c2c2" stroke-width="1.1"/></svg>
<svg style="left:43px;top:854px" width="8" height="10" viewBox="0 0 8 10"><path d="M1.5 0.5 L6.5 5 L1.5 9.5" fill="none" stroke="#c2c2c2" stroke-width="1.1"/></svg>
<svg style="left:73px;top:853px" width="13" height="11" viewBox="0 0 13 11"><path d="M0 1 H12.5 M0 5.5 H12.5 M0 10 H12.5" fill="none" stroke="#555" stroke-width="1.1"/></svg>
<div class="a" style="left:98px;top:844px;width:150px;height:24.5px;background:#b7d3a0;"></div>
<div class="t" style="left:104.00px;top:849.64px;font-size:14.25px;color:#2b3a2b;font-weight:400;transform-origin:0 0;transform:scaleX(0.9525);">Monthly Family Budget</div>
<div class="a" style="left:104px;top:872px;width:138px;height:3px;background:#3e6b4a;"></div>
<svg style="left:260.5px;top:851.5px" width="12" height="12" viewBox="0 0 12 12"><path d="M6 0 V12 M0 6 H12" fill="none" stroke="#666" stroke-width="1.1"/></svg>
<div class="a" style="left:0px;top:875px;width:1440px;height:1px;background:#e1e1e1;"></div>
<div class="a" style="left:0px;top:876px;width:1440px;height:23px;background:#ffffff;"></div>
<div class="a" style="left:0px;top:898px;width:1440px;height:2px;background:#6b6b6b;"></div>
<div class="t" style="left:14.00px;top:882.66px;font-size:11.03px;color:#3b3b3b;font-weight:400;transform-origin:0 0;transform:scaleX(0.9995);">Calculation Mode: Automatic</div>
<div class="t" style="left:172.00px;top:882.66px;font-size:11.03px;color:#3b3b3b;font-weight:400;transform-origin:0 0;transform:scaleX(0.9723);">Workbook Statistics</div>
<svg style="left:1144.0px;top:887.2px" width="5" height="2.5" viewBox="0 0 5 2.5"><path d="M0.5 0.5 L2.5 2.0 L4.5 0.5" fill="none" stroke="#555" stroke-width="1.1"/></svg>
<div class="t" style="left:1189.70px;top:882.66px;font-size:11.03px;color:#3b3b3b;font-weight:400;transform-origin:0 0;transform:scaleX(0.9703);">Give Feedback to Microsoft</div>
<div class="a" style="left:1356px;top:888px;width:11px;height:1.1px;background:#777;"></div>
<div class="t" style="left:1380.80px;top:882.66px;font-size:11.03px;color:#3b3b3b;font-weight:400;transform-origin:0 0;transform:scaleX(0.8930);">100%</div>
<svg style="left:1417.5px;top:882px" width="11" height="11" viewBox="0 0 11 11"><path d="M5.5 0 V11 M0 5.5 H11" fill="none" stroke="#555" stroke-width="1.1"/></svg>
<div class="a" style="left:1102.5px;top:785px;width:340px;height:91px;background:#fff;border:1px solid #7a7a7a;box-shadow:0 0 4px rgba(0,0,0,0.15);"></div>
<div class="t" style="left:1118.20px;top:804.10px;font-size:16.06px;color:#3a7a4e;font-weight:400;transform-origin:0 0;transform:scaleX(0.9714);">We'd love your feedback!</div>
<div class="t" style="left:1118.20px;top:834.78px;font-size:13.97px;color:#1f1f1f;font-weight:400;transform-origin:0 0;transform:scaleX(0.9923);">We have just two questions for you.</div>
<svg style="left:1411px;top:803.2px" width="13" height="13.5" viewBox="0 0 13 13.5"><path d="M0.6 0.6 L12.4 12.9 M12.4 0.6 L0.6 12.9" fill="none" stroke="#111" stroke-width="1.7"/></svg>
</body></html>
